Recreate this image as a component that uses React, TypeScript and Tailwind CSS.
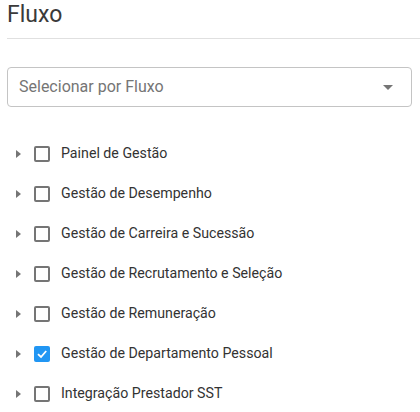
import { useState } from "react";

const fluxos = [
    { id: 1, label: "Painel de Gestão", checked: false },
    { id: 2, label: "Gestão de Desempenho", checked: false },
    { id: 3, label: "Gestão de Carreira e Sucessão", checked: false },
    { id: 4, label: "Gestão de Recrutamento e Seleção", checked: false },
    { id: 5, label: "Gestão de Remuneração", checked: false },
    { id: 6, label: "Gestão de Departamento Pessoal", checked: true },
    { id: 7, label: "Integração Prestador SST", checked: false },
];

function App() {
    const [items, setItems] = useState(fluxos);

    function toggle(id: number) {
        setItems((prev) => prev.map((i) => (i.id === id ? { ...i, checked: !i.checked } : i)));
    }

    return (
        <div className="w-[420px] h-[412px] bg-white overflow-hidden font-['Roboto',sans-serif]">
            <div className="pl-[7px]">
                <h1 className="pt-[2px] text-[23px] leading-[26px] text-[#3a3a3a]">Fluxo</h1>
                <div className="mt-[10px] h-px bg-[#e0e0e0]" />
            </div>

            <div className="pl-[7px] pr-[8px] mt-[28px]">
                <div className="h-[40px] border border-[#c4c4c4] rounded-[4px] flex items-center justify-between pl-[11px] pr-[18px]">
                    <span className="text-[16px] text-[#757575]">Selecionar por Fluxo</span>
                    <svg width="10" height="5" viewBox="0 0 10 5">
                        <path d="M0 0 L10 0 L5 5 Z" fill="#757575" />
                    </svg>
                </div>
            </div>

            <ul className="mt-[27px]">
                {items.map((item) => (
                    <li key={item.id} className="h-[40px] flex items-center">
                        <span className="w-[34px] pl-[16px] flex items-center">
                            <svg width="5" height="8" viewBox="0 0 5 8">
                                <path d="M0 0 L5 4 L0 8 Z" fill="#757575" />
                            </svg>
                        </span>
                        <button
                            type="button"
                            onClick={() => toggle(item.id)}
                            className={
                                item.checked
                                    ? "w-[16px] h-[16px] rounded-[2px] bg-[#2196f3] flex items-center justify-center"
                                    : "w-[16px] h-[16px] rounded-[2px] border-2 border-[#757575] bg-white"
                            }
                        >
                            {item.checked && (
                                <svg width="12" height="12" viewBox="0 0 12 12">
                                    <path d="M2 6.2 L5 9 L10.2 3" stroke="white" strokeWidth="1.8" fill="none" />
                                </svg>
                            )}
                        </button>
                        <span className="ml-[11px] text-[14.2px] text-[#333]">{item.label}</span>
                    </li>
                ))}
            </ul>
        </div>
    );
}

export default App;
